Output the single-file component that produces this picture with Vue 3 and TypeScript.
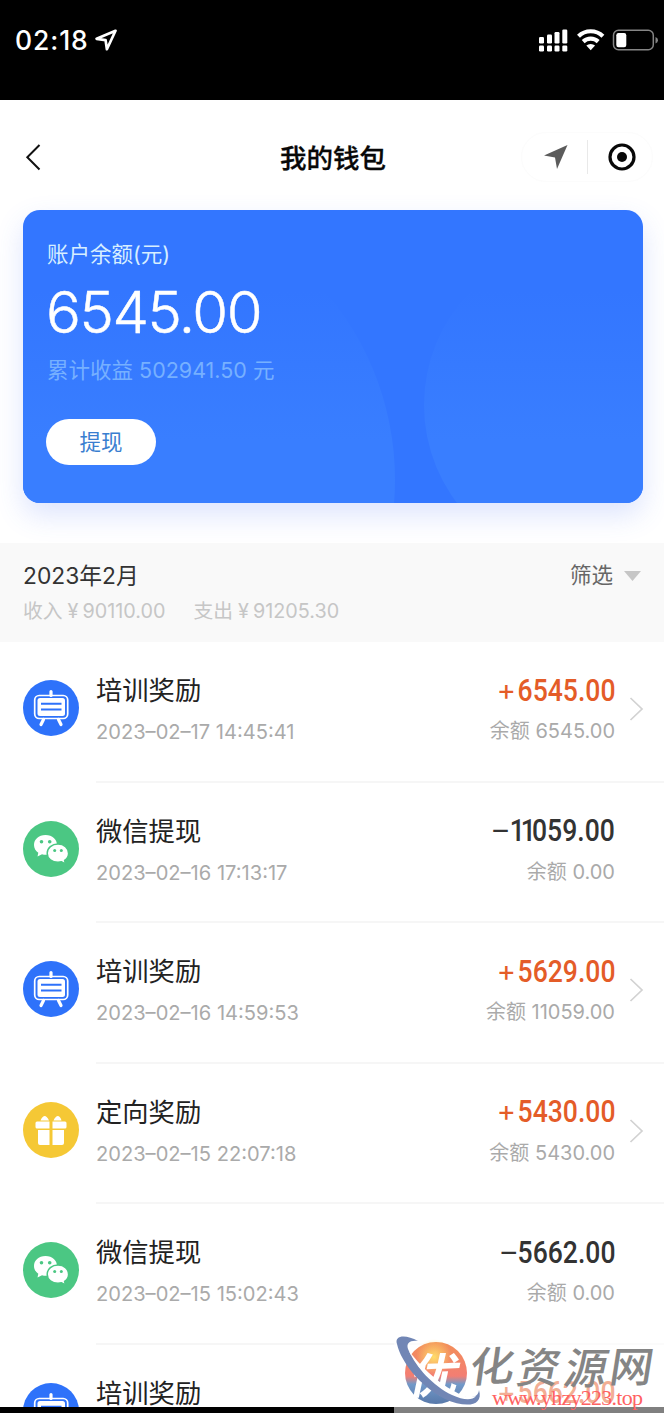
<script setup lang="ts">
type Kind = 'training' | 'wechat' | 'gift'

interface Entry {
  kind: Kind
  title: string
  time: string
  sign: string
  amount: string
  balance: string
}

const entries: Entry[] = [
  { kind: 'training', title: '培训奖励', time: '2023–02–17 14:45:41', sign: '+', amount: '6545.00', balance: '6545.00' },
  { kind: 'wechat', title: '微信提现', time: '2023–02–16 17:13:17', sign: '–', amount: '11059.00', balance: '0.00' },
  { kind: 'training', title: '培训奖励', time: '2023–02–16 14:59:53', sign: '+', amount: '5629.00', balance: '11059.00' },
  { kind: 'gift', title: '定向奖励', time: '2023–02–15 22:07:18', sign: '+', amount: '5430.00', balance: '5430.00' },
  { kind: 'wechat', title: '微信提现', time: '2023–02–15 15:02:43', sign: '–', amount: '5662.00', balance: '0.00' },
  { kind: 'training', title: '培训奖励', time: '', sign: '+', amount: '5662.00', balance: '' },
]

// Leading ones are set tighter than the other digits.
const ones = (amount: string): string => amount.match(/^1*/)?.[0] ?? ''
</script>

<template>
  <div class="screen">
    <div class="status">
      <span class="clock">02:18</span>
      <svg class="loc" width="24" height="24" viewBox="0 0 24 24"><path d="M20.500 2.800 1.600 10.800l9 1.400 1.300 9Z" fill="none" stroke="#fff" stroke-width="2.700" stroke-linejoin="round" /></svg>
      <svg class="indicators" width="122" height="26" viewBox="0 0 122 26" fill="#fff">
        <rect x="1" y="10" width="5" height="6.500" rx="1.200" /><rect x="9" y="7.500" width="5" height="9" rx="1.200" /><rect x="16.500" y="5" width="5" height="11.500" rx="1.200" /><rect x="24.300" y="2.500" width="5" height="14" rx="1.200" />
        <rect x="1" y="18.500" width="5" height="6" rx="1.200" /><rect x="9" y="18.500" width="5" height="6" rx="1.200" /><rect x="16.500" y="18.500" width="5" height="6" rx="1.200" /><rect x="24.300" y="18.500" width="5" height="6" rx="1.200" />
        <g fill="none" stroke="#fff" stroke-width="4.200"><path d="M40.500 9.200a17.500 17.500 0 0 1 24.400 0" /><path d="M45.200 14.600a11 11 0 0 1 15 0" /></g>
        <path d="M48.300 18.600a6.500 6.500 0 0 1 8.800 0l-4.400 4.700Z" />
        <rect x="75.500" y="3.300" width="39.800" height="19.500" rx="5" fill="none" stroke="#858585" stroke-width="1.500" />
        <rect x="78.300" y="6" width="10" height="14.300" rx="2.200" /><path d="M117.500 10q2.500 1 2.500 3.200t-2.500 3.200Z" fill="#858585" />
      </svg>
    </div>
    <header class="nav">
      <svg class="back" width="16" height="28" viewBox="0 0 16 28"><path d="M14.500 2 2.300 14.200 14.500 26.500" fill="none" stroke="#111" stroke-width="2" /></svg>
      <h1>我的钱包</h1>
      <div class="capsule">
        <svg width="26" height="26" viewBox="0 0 26 26"><path d="M24.500 1 1 11.500l11 2L14 25Z" fill="#5b5b5b" /></svg>
        <i></i>
        <svg width="28" height="28" viewBox="0 0 28 28"><circle cx="14" cy="14" r="12" fill="none" stroke="#080808" stroke-width="3.200" /><circle cx="14" cy="14" r="5" fill="#080808" /></svg>
      </div>
    </header>
    <section class="card">
      <svg class="card-bg" width="620" height="293" viewBox="0 0 620 293">
        <defs>
          <linearGradient id="fade" gradientUnits="userSpaceOnUse" x1="0" y1="80" x2="0" y2="230">
            <stop offset="0" stop-color="#397eff" stop-opacity="0" /><stop offset="1" stop-color="#397eff" />
          </linearGradient>
        </defs>
        <circle cx="82" cy="270" r="290" fill="url(#fade)" />
        <circle cx="563" cy="195" r="162" fill="url(#fade)" />
      </svg>
      <div class="card-body">
        <p class="label">账户余额(元)</p>
        <p class="total">6545.00</p>
        <p class="earned">累计收益 <b>502941.50</b> 元</p>
        <button class="withdraw">提现</button>
      </div>
    </section>
    <section class="month">
      <div class="month-top">
        <span class="month-name"><b>2023</b>年<b>2</b>月</span>
        <span class="filter">筛选<svg width="17" height="10" viewBox="0 0 17 10"><path d="M0 0h17L8.500 10Z" fill="#c6c6c6" /></svg></span>
      </div>
      <div class="sums"><span class="income">收入<em>¥</em><b>90110.00</b></span><span>支出<em>¥</em><b>91205.30</b></span></div>
    </section>
    <ul class="list">
      <li v-for="(e, i) in entries" :key="i" class="row">
        <svg class="icon" width="56" height="56" viewBox="0 0 56 56">
          <template v-if="e.kind === 'training'">
            <circle cx="28" cy="28" r="28" fill="#2e72fa" />
            <path d="M28 11.500v4M20.500 39.500l-2.500 5M35.500 39.500l2.500 5" stroke="#fff" stroke-width="3.200" stroke-linecap="round" />
            <rect x="11.700" y="15.500" width="33" height="23" rx="4.500" fill="none" stroke="#fff" stroke-width="1.700" />
            <rect x="14.500" y="18" width="27.500" height="18" rx="2.500" fill="#fff" />
            <path d="M18 23.800h20.500M18 29.600h20.500" stroke="#2e72fa" stroke-width="2" />
          </template>
          <template v-else-if="e.kind === 'wechat'">
            <circle cx="28" cy="28" r="28" fill="#4bc783" />
            <path d="M22.500 14C15.500 14 11 18.500 11 24c0 3.300 1.700 6 4.300 7.800l-.8 3.700 4.500-2.300c1.200.4 2.600.6 4 .6 6.500 0 11-4.500 11-9.900S29.500 14 22.500 14Z" fill="#fff" />
            <path d="M35 23c-6 0-10.800 3.900-10.800 9.300S29 41.300 35 41.300c1.200 0 2.400-.2 3.500-.5l4 2.200-.9-3.700c2.600-1.700 4-4 4-6.800 0-5.500-4.600-9.500-10.600-9.500Z" fill="#fff" stroke="#4bc783" stroke-width="1.500" />
            <g fill="#4bc783"><circle cx="18.500" cy="20.700" r="1.800" /><circle cx="26.700" cy="20.700" r="1.800" /><circle cx="31.700" cy="29.500" r="1.500" /><circle cx="38.300" cy="29.500" r="1.500" /></g>
          </template>
          <template v-else>
            <circle cx="28" cy="28" r="28" fill="#f5c835" />
            <g fill="#fff"><path d="M14 19.500h12.500v7H14q-1.500 0-1.500-1.500v-4q0-1.500 1.500-1.500ZM29.500 19.500H42q1.500 0 1.500 1.500v4q0 1.500-1.500 1.500H29.500ZM15 28h11.500v15H17q-2 0-2-2ZM29.500 28H41v13q0 2-2 2h-9.500Z" /><path d="M17.500 18.500q1.500-4 4-4.500 2.500 0 4.500 4.500ZM30.500 18.500q2-4.500 4.500-4.500 2.500.5 3.500 4.500Z" /></g>
          </template>
        </svg>
        <div class="main">
          <div class="info"><div class="title">{{ e.title }}</div><div class="time">{{ e.time }}</div></div>
          <div class="money">
            <div class="amount" :class="{ plus: e.sign === '+' }"><span class="sign">{{ e.sign }}</span><span class="digits"><span class="ones">{{ ones(e.amount) }}</span>{{ e.amount.slice(ones(e.amount).length) }}</span></div>
            <div v-if="e.balance" class="balance">余额 <b>{{ e.balance }}</b></div>
          </div>
          <svg v-if="e.sign === '+'" class="chevron" width="15" height="24" viewBox="0 0 15 24"><path d="M1.500 1 13 12 1.500 23" fill="none" stroke="#d2d2d2" stroke-width="1.700" /></svg>
        </div>
      </li>
    </ul>
    <div class="bottom-edge"></div>
    <div class="watermark">
      <svg width="270" height="87" viewBox="0 0 270 87">
        <defs>
          <linearGradient id="ball" x1="0" y1="0" x2="0" y2="1"><stop offset="0" stop-color="#f28f58" /><stop offset=".55" stop-color="#f37e73" /><stop offset=".68" stop-color="#7299c9" /><stop offset="1" stop-color="#5879aa" /></linearGradient>
          <radialGradient id="sun"><stop offset="0" stop-color="#ffdd69" /><stop offset="1" stop-color="#ffdd69" stop-opacity="0" /></radialGradient>
        </defs>
        <circle cx="42" cy="47" r="31" fill="url(#ball)" /><circle cx="40" cy="31" r="18" fill="url(#sun)" />
        <text class="seal" transform="translate(13 68) rotate(-2) skewX(-14) scale(1.120 1.080)">优</text>
        <path d="M24 15C12 8 0 9 3 18c4 18 23 42 48 55 20 9 39 8 34-9-1 9-11 9-26 3C38 58 20 38 14 23c-2-6 2-9 10-8Z" fill="#7186b5" />
        <path d="M15 25c7 16 24 35 43 44 11 5 20 6 24 1-7 2-14 0-22-5C42 56 25 38 15 25Z" fill="#fff" />
        <g class="brand"><text transform="translate(74 57) rotate(-4) skewX(-12) scale(.9 .82)">化</text><text transform="translate(121 57) skewX(-12) scale(.84 .84)">资</text><text transform="translate(168 58) skewX(-12) scale(.85 .86)">源</text><text transform="translate(214 56) skewX(-9) scale(.86 .84)">网</text></g>
        <text class="url" x="98" y="79" textLength="151" lengthAdjust="spacing">www.yhzy223.top</text>
      </svg>
    </div>
  </div>
</template>

<style>
body { margin: 0; background: #fff; overflow: hidden; }
</style>

<style scoped>
* { box-sizing: border-box; }
p, h1, ul { margin: 0; padding: 0; }
b, em { font-weight: inherit; font-style: normal; }
.screen { position: relative; width: 664px; height: 1413px; overflow: hidden; background: #fff; font-family: Inter, "Noto Sans CJK SC", sans-serif; font-weight: 400; color: #222; display: flex; flex-direction: column; }
.status { flex: none; height: 100px; background: #000; display: flex; padding: 27px 4px 0 15px; color: #fff; }
.clock { font-size: 26.500px; line-height: 27px; font-weight: 500; letter-spacing: .9px; width: 80px; white-space: nowrap; }
.loc { margin-top: 1px; }
.indicators { margin: 0 0 0 auto; flex: none; }
.nav { flex: none; height: 110px; display: flex; align-items: flex-start; padding: 32px 11px 0 25px; position: relative; }
.back { margin-top: 11px; }
h1 { flex: none; margin-left: 239px; margin-top: 6px; font-size: 26.500px; line-height: 40px; font-weight: 500; color: #080808; -webkit-text-stroke: .3px #080808; }
.capsule { margin-left: auto; width: 132px; height: 50px; border-radius: 25px; border: 1px solid #fcfcfc; display: flex; align-items: center; padding: 0 16px 0 21px; justify-content: space-between; }
.capsule i { width: 1px; height: 34px; background: #e9e9e9; margin-right: 2px; }
.card { flex: none; position: relative; width: 620px; height: 293px; margin-left: 23px; border-radius: 17px; background: #3376ff; box-shadow: 0 12px 28px rgba(65, 105, 245, .18); }
.card-bg { position: absolute; inset: 0; border-radius: 17px; }
.card-body { position: relative; padding: 27px 0 0 24px; display: flex; flex-direction: column; align-items: flex-start; }
.label { font-size: 21.500px; line-height: 34px; color: #d7eeff; }
.total { font-size: 58px; line-height: 70px; margin-top: 6px; margin-left: -1px; font-weight: 300; color: #fff; letter-spacing: -1.450px; -webkit-text-stroke: .5px #fff; }
.earned { font-size: 21.500px; line-height: 32px; margin-top: 7px; color: #76b0ff; white-space: nowrap; }
.withdraw { margin: 33px 0 0 -1px; padding: 0 0 1px; width: 110px; height: 46px; border: 0; border-radius: 23px; background: #fff; color: #397ed0; font: 400 21.500px/44px Inter, "Noto Sans CJK SC", sans-serif; }
.month { flex: none; height: 99px; margin-top: 40px; background: #f9f9f9; padding: 15px 23px 0; position: relative; }
.month-top { display: flex; justify-content: space-between; line-height: 35px; }
.month-name { font-size: 22.800px; color: #333; }
.filter { font-size: 21.500px; color: #666; display: flex; align-items: center; gap: 11px; }
.sums { display: flex; gap: 28px; font-size: 19.800px; line-height: 36px; color: #c6c6c6; white-space: nowrap; }
.sums em { margin: 0 4px 0 5px; }
.list { list-style: none; flex: none; }
.row { height: 140.500px; display: flex; padding-left: 23px; }
.icon { flex: none; margin-top: 38px; }
.main { flex: 1; margin-left: 17px; border-bottom: 2px solid #f6f6f6; display: flex; padding-top: 28px; }
.title { font-size: 26.300px; line-height: 42px; color: #222; }
.time { margin-top: 5px; font-size: 20.100px; line-height: 30px; color: #aaa; white-space: nowrap; }
.money { margin-left: auto; margin-right: 49px; text-align: right; }
.chevron { position: absolute; left: 629px; margin-top: 27px; }
.amount { display: flex; justify-content: flex-end; align-items: center; height: 41px; color: #333; }
.plus { color: #e45c28; }
.sign { font-size: 29px; line-height: 36px; width: 97px; text-align: right; transform: translateY(-1px); }
.digits { font-family: Roboto, "Liberation Sans", sans-serif; font-weight: 500; font-size: 30.500px; line-height: 40px; transform: scaleX(.87); transform-origin: right center; margin-left: -13.500px; }
.ones { letter-spacing: -4.500px; }
.balance { margin-top: 5px; font-size: 20px; line-height: 30px; color: #aaa; white-space: nowrap; }
.bottom-edge { position: absolute; left: 0; right: 0; bottom: 0; height: 6px; background: #000; }
.watermark { position: absolute; left: 394px; top: 1326px; width: 270px; height: 87px; background: rgba(255, 255, 255, .5); }
.watermark svg { display: block; }
.seal { font: 700 44px "Noto Sans CJK SC", sans-serif; fill: #fff; }
.brand { font: 500 50px "Noto Sans CJK SC", sans-serif; fill: #858585; }
.url { font: 22px "Liberation Serif", serif; fill: #ff6262; }
</style>
